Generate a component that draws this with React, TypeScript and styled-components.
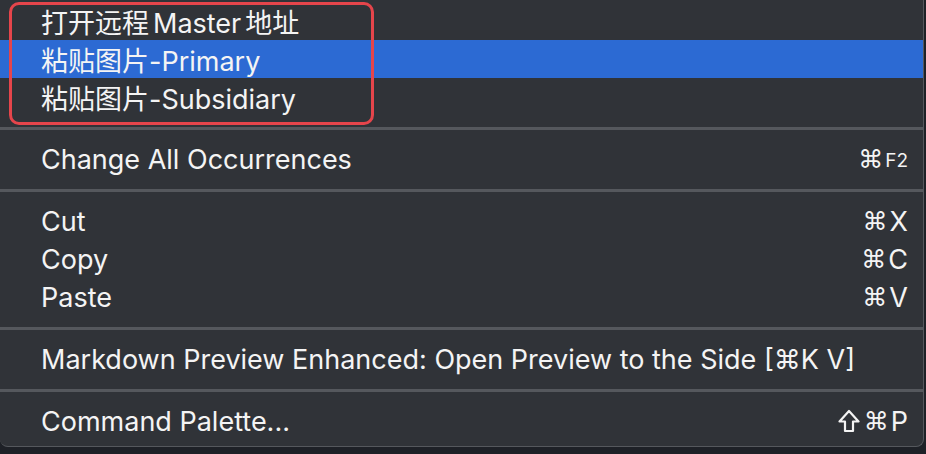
import React from "react";
import styled, { createGlobalStyle } from "styled-components";

const Global = createGlobalStyle`
  html, body { margin: 0; padding: 0; background: #1e2127; }
  body { width: 926px; height: 454px; overflow: hidden; }
`;

const Page = styled.div`
  position: relative;
  width: 926px;
  height: 454px;
  font-family: Inter, "Noto Sans CJK SC", "DejaVu Sans", sans-serif;
`;

const Menu = styled.div`
  width: 923px;
  padding-top: 2px;
  padding-bottom: 6px;
  background: #303338;
  border-right: 1px solid #55585d;
  border-bottom: 1px solid #55585d;
  border-bottom-right-radius: 8px;
  border-bottom-left-radius: 8px;
  display: flex;
  flex-direction: column;
`;

const Item = styled.div<{ $active?: boolean }>`
  height: 38px;
  display: flex;
  align-items: center;
  justify-content: space-between;
  padding: 0 15px 0 41px;
  background: ${(p) => (p.$active ? "#2c6ad3" : "transparent")};
  color: #f4f4f4;
  font-size: 27px;
  white-space: nowrap;
`;

const Label = styled.span``;

const Latin = styled.span`
  margin: 0 4px;
`;

const Keys = styled.span`
  display: flex;
  align-items: center;
  font-size: 27px;
  color: #f4f4f4;
`;

const Cmd = styled.span`
  font-family: "DejaVu Sans", sans-serif;
  font-size: 25px;
  margin-right: 2px;
`;

const Small = styled.span`
  font-size: 19px;
  padding-top: 3px;
`;

const ShiftIcon = styled.svg`
  width: 22px;
  height: 24px;
  margin-right: 4px;
`;

const Separator = styled.div`
  height: 3px;
  margin: 11px 0 10px;
  background: #55585d;
`;

const Annotation = styled.div`
  position: absolute;
  left: 9px;
  top: 2px;
  width: 359px;
  height: 117px;
  border: 3px solid #e5454b;
  border-radius: 10px;
  pointer-events: none;
`;

const Shift = () => (
  <ShiftIcon viewBox="0 0 22 24" aria-hidden="true">
    <path
      d="M11 2 L20.5 12.5 H15 V22 H7 V12.5 H1.5 Z"
      fill="none"
      stroke="#f4f4f4"
      strokeWidth="2.2"
      strokeLinejoin="round"
    />
  </ShiftIcon>
);

export default function App() {
  return (
    <Page>
      <Global />
      <Menu>
        <Item>
          <Label>
            打开远程<Latin>Master</Latin>地址
          </Label>
        </Item>
        <Item $active>
          <Label>粘贴图片-Primary</Label>
        </Item>
        <Item>
          <Label>粘贴图片-Subsidiary</Label>
        </Item>
        <Separator />
        <Item>
          <Label>Change All Occurrences</Label>
          <Keys>
            <Cmd>⌘</Cmd>
            <Small>F2</Small>
          </Keys>
        </Item>
        <Separator />
        <Item>
          <Label>Cut</Label>
          <Keys>
            <Cmd>⌘</Cmd>X
          </Keys>
        </Item>
        <Item>
          <Label>Copy</Label>
          <Keys>
            <Cmd>⌘</Cmd>C
          </Keys>
        </Item>
        <Item>
          <Label>Paste</Label>
          <Keys>
            <Cmd>⌘</Cmd>V
          </Keys>
        </Item>
        <Separator />
        <Item>
          <Label>Markdown Preview Enhanced: Open Preview to the Side [⌘K V]</Label>
        </Item>
        <Separator />
        <Item>
          <Label>Command Palette...</Label>
          <Keys>
            <Shift />
            <Cmd>⌘</Cmd>P
          </Keys>
        </Item>
      </Menu>
      <Annotation />
    </Page>
  );
}
